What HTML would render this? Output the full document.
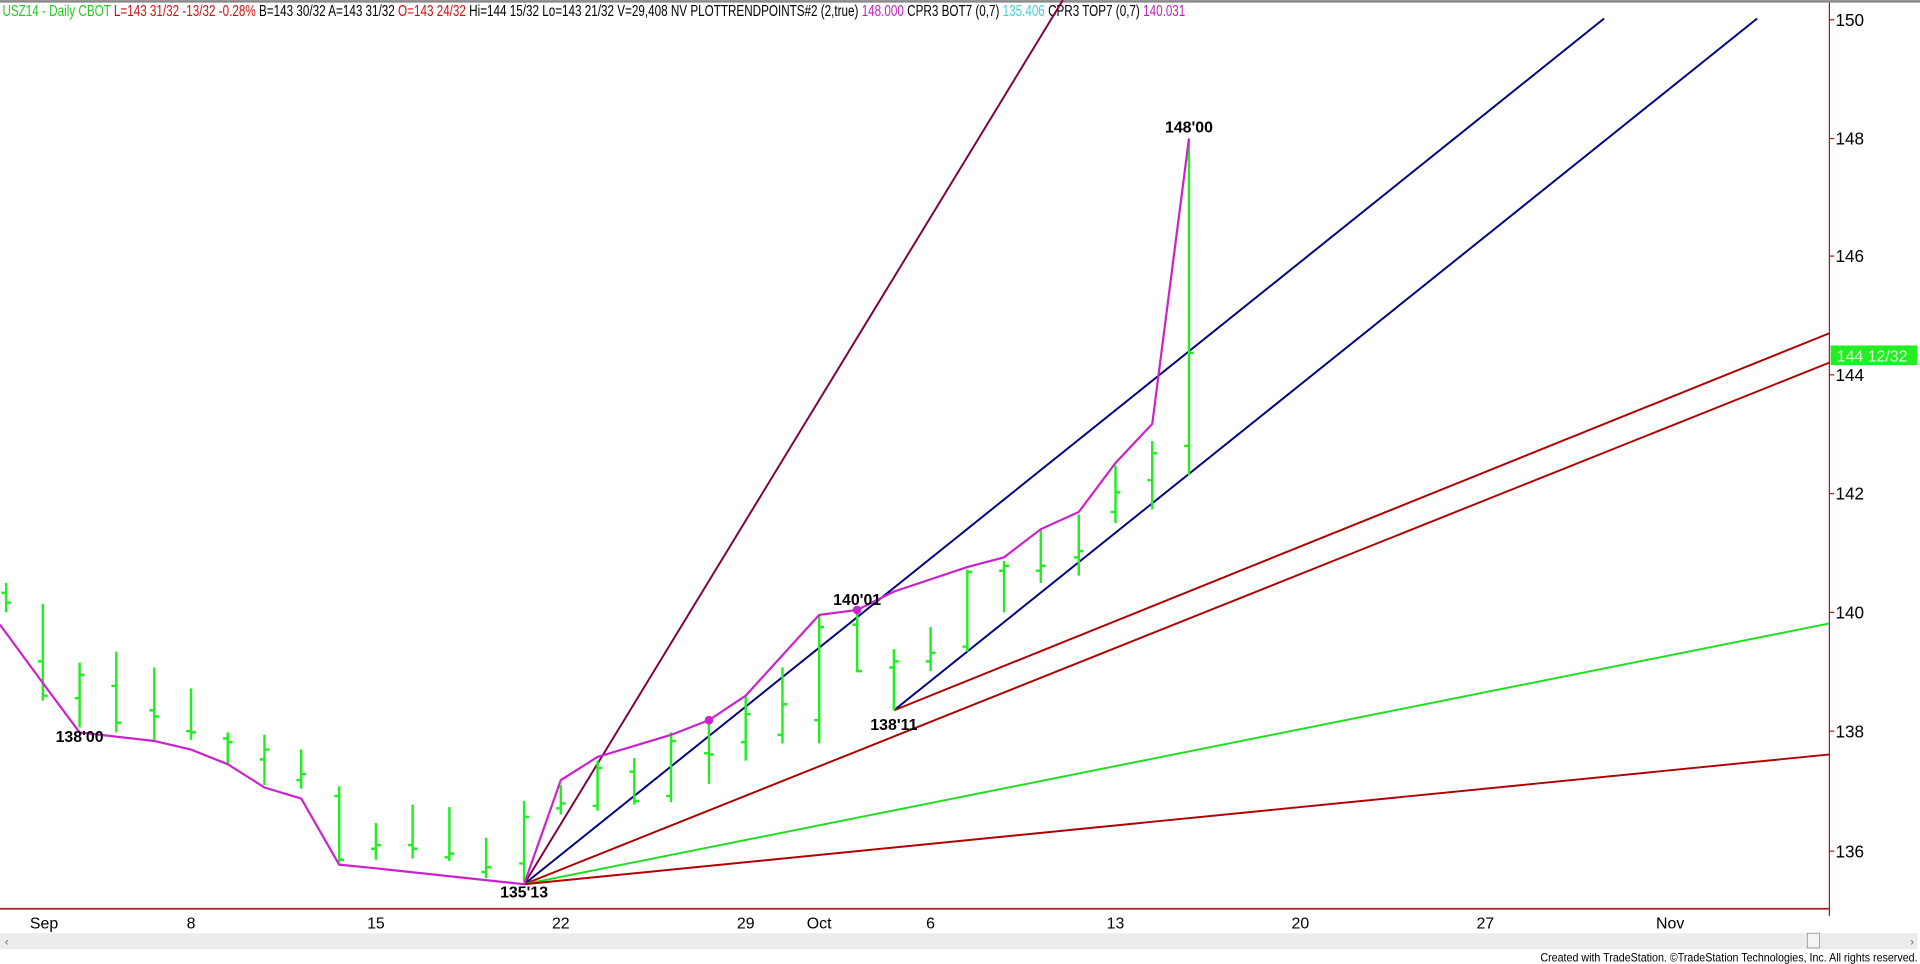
<!DOCTYPE html>
<html><head><meta charset="utf-8"><style>
html,body{margin:0;padding:0;background:#fff;overflow:hidden}
svg{display:block}
text{font-family:"Liberation Sans Narrow","Liberation Sans",sans-serif}
</style></head><body>
<svg width="1920" height="964" viewBox="0 0 1568 787" xmlns="http://www.w3.org/2000/svg">
<rect width="1568" height="787" fill="#fff"/>
<line x1="0" y1="1" x2="1568" y2="1" stroke="#888" stroke-width="2"/>
<text x="2" y="13" font-size="13" textLength="966" lengthAdjust="spacingAndGlyphs"><tspan fill="#22cc22">USZ14 - Daily  CBOT </tspan><tspan fill="#d01010"> L=143 31/32  -13/32  -0.28% </tspan><tspan fill="#000"> B=143 30/32  A=143 31/32 </tspan><tspan fill="#d01010"> O=143 24/32 </tspan><tspan fill="#000"> Hi=144 15/32  Lo=143 21/32  V=29,408  NV  PLOTTRENDPOINTS#2 (2,true) </tspan><tspan fill="#c020c0"> 148.000 </tspan><tspan fill="#000"> CPR3 BOT7 (0,7) </tspan><tspan fill="#40d0d0"> 135.406 </tspan><tspan fill="#000"> CPR3 TOP7 (0,7) </tspan><tspan fill="#c020c0"> 140.031</tspan></text>
<line x1="1494" y1="2" x2="1494" y2="748" stroke="#a02020" stroke-width="1"/>
<line x1="0" y1="742" x2="1494" y2="742" stroke="#a02020" stroke-width="1.5"/>
<g stroke="#a02020" stroke-width="1">
<line x1="1494" y1="16" x2="1498" y2="16"/><line x1="1494" y1="113" x2="1498" y2="113"/><line x1="1494" y1="209" x2="1498" y2="209"/><line x1="1494" y1="306" x2="1498" y2="306"/><line x1="1494" y1="403" x2="1498" y2="403"/><line x1="1494" y1="500" x2="1498" y2="500"/><line x1="1494" y1="597" x2="1498" y2="597"/><line x1="1494" y1="695" x2="1498" y2="695"/>
</g>
<g font-size="14" fill="#000">
<text x="1499" y="21">150</text><text x="1499" y="118">148</text><text x="1499" y="214">146</text><text x="1499" y="311">144</text><text x="1499" y="408">142</text><text x="1499" y="505">140</text><text x="1499" y="602">138</text><text x="1499" y="700">136</text>
</g>
<rect x="1495" y="282" width="71" height="16" fill="#22ee22"/>
<text x="1500" y="295" font-size="13" fill="#e0ffe0">144 12/32</text>
<g font-size="13" fill="#000" text-anchor="middle">
<text x="36" y="758">Sep</text><text x="156" y="758">8</text><text x="307" y="758">15</text><text x="458" y="758">22</text><text x="609" y="758">29</text><text x="669" y="758">Oct</text><text x="760" y="758">6</text><text x="911" y="758">13</text><text x="1062" y="758">20</text><text x="1213" y="758">27</text><text x="1364" y="758">Nov</text>
</g>
<rect x="0" y="762" width="1566" height="13" fill="#ececec"/>
<rect x="1476" y="762" width="10" height="12" fill="#f4f4f4" stroke="#999" stroke-width="0.7"/>
<text x="4" y="772" font-size="9" fill="#666">‹</text><text x="1560" y="772" font-size="9" fill="#666">›</text>
<text x="1258" y="785" font-size="10" fill="#000" textLength="308" lengthAdjust="spacingAndGlyphs">Created with TradeStation. ©TradeStation Technologies, Inc. All rights reserved.</text>
<g stroke-width="1.6" fill="none">
<line x1="428" y1="722" x2="868" y2="0" stroke="#800040"/>
<line x1="428" y1="722" x2="1310" y2="15" stroke="#000080"/>
<line x1="730" y1="580" x2="1435" y2="15" stroke="#000080"/>
<line x1="730" y1="580" x2="1494" y2="272" stroke="#b00000"/>
<line x1="428" y1="722" x2="1494" y2="296" stroke="#b00000"/>
<line x1="428" y1="722" x2="1494" y2="509" stroke="#22dd22"/>
<line x1="428" y1="722" x2="1494" y2="616" stroke="#b00000"/>
</g>
<g stroke="#22ee22" stroke-width="2">
<path d="M5 476V500M1 484H5M5 492H9"/>
<path d="M35 493V572M31 540H35M35 568H39"/>
<path d="M65 541V594M61 570H65M65 551H69"/>
<path d="M95 532V598M91 560H95M95 590H99"/>
<path d="M126 545V604M122 580H126M126 585H130"/>
<path d="M156 562V604M152 597H156M156 598H160"/>
<path d="M186 598V624M182 603H186M186 606H190"/>
<path d="M216 600V641M212 620H216M216 612H220"/>
<path d="M246 612V644M242 637H246M246 632H250"/>
<path d="M277 642V704M273 650H277M277 702H281"/>
<path d="M307 672V702M303 693H307M307 690H311"/>
<path d="M337 657V701M333 690H337M337 693H341"/>
<path d="M367 659V703M363 700H367M367 697H371"/>
<path d="M397 684V717M393 712H397M397 708H401"/>
<path d="M428 654V720M424 705H428M428 667H432"/>
<path d="M458 641V665M454 660H458M458 656H462"/>
<path d="M488 621V662M484 658H488M488 627H492"/>
<path d="M518 619V657M514 630H518M518 654H522"/>
<path d="M548 598V655M544 650H548M548 605H552"/>
<path d="M579 587V640M575 615H579M579 616H583"/>
<path d="M609 568V621M605 606H609M609 583H613"/>
<path d="M639 545V607M635 600H639M639 575H643"/>
<path d="M669 502V607M665 588H669M669 512H673"/>
<path d="M700 495V549M696 510H700M700 548H704"/>
<path d="M730 530V580M726 545H730M730 540H734"/>
<path d="M760 512V548M756 540H760M760 533H764"/>
<path d="M790 465V532M786 528H790M790 467H794"/>
<path d="M820 458V500M816 466H820M820 462H824"/>
<path d="M850 432V476M846 466H850M850 462H854"/>
<path d="M881 420V470M877 455H881M881 450H885"/>
<path d="M911 380V427M907 418H911M911 402H915"/>
<path d="M941 360V416M937 392H941M941 370H945"/>
<path d="M971 113V388M967 364H971M971 288H975"/>
</g>
<polyline fill="none" stroke="#cc22cc" stroke-width="1.8" points="0,510 33,555 65,598 126,605 156,612 186,624 216,643 246,652 277,706 307,709 428,722 458,637 488,618 548,600 579,588 609,568 669,502 700,498 730,483 790,463 820,455 850,432 881,418 911,378 941,346 971,113"/>
<circle cx="579" cy="588" r="3.5" fill="#cc22cc"/>
<circle cx="700" cy="498" r="3.5" fill="#cc22cc"/>
<g font-size="13" font-weight="bold" fill="#000" text-anchor="middle">
<text x="65" y="606">138'00</text>
<text x="428" y="733">135'13</text>
<text x="700" y="494">140'01</text>
<text x="730" y="596">138'11</text>
<text x="971" y="108">148'00</text>
</g>
</svg>
</body></html>
